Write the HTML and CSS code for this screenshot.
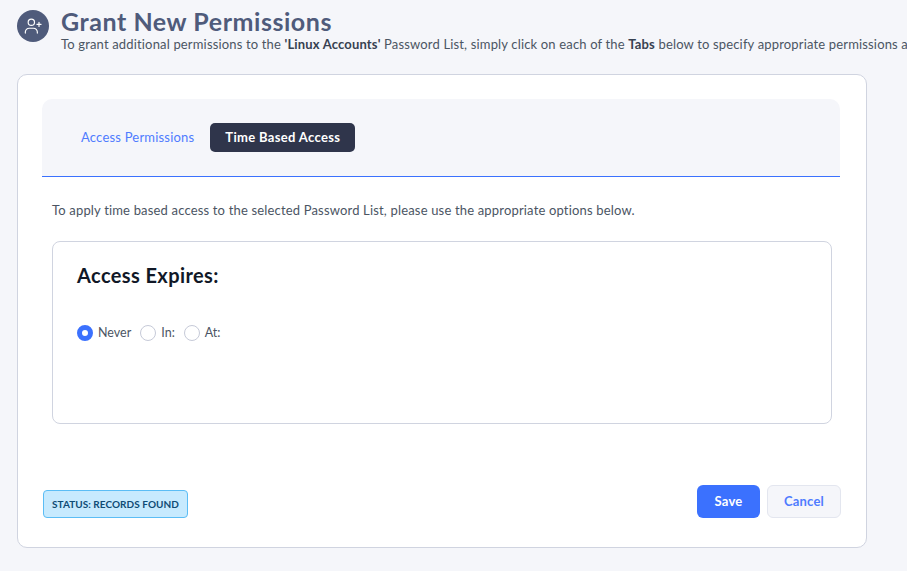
FILE: index.html
```html
<!DOCTYPE html>
<html lang="en">
<head>
  <meta charset="UTF-8" />
  <title>Grant New Permissions</title>
  <link rel="stylesheet" href="styles.css">
</head>
<body>
  <header class="page-head">
    <div class="head-icon">
      <svg viewBox="0 0 24 24" width="20" height="20" fill="none" stroke="#fff" stroke-width="1.4" stroke-linecap="round" stroke-linejoin="round">
        <circle cx="10" cy="7.5" r="3.8"/>
        <path d="M2.8 20.5v-1.2a4.6 4.6 0 0 1 4.6-4.6h5.2a4.6 4.6 0 0 1 4.6 4.6v1.2"/>
        <path d="M19.2 7.5v5M16.7 10h5"/>
      </svg>
    </div>
    <div class="head-text">
      <h1>Grant New Permissions</h1>
      <p>To grant additional permissions to the <b>'Linux Accounts'</b> Password List, simply click on each of the <b>Tabs</b> below to specify appropriate permissions a</p>
    </div>
  </header>

  <main class="card">
    <div class="tabs">
      <a class="tab" href="#">Access Permissions</a>
      <a class="tab active" href="#">Time Based Access</a>
    </div>

    <p class="intro">To apply time based access to the selected Password List, please use the appropriate options below.</p>

    <section class="expires">
      <h2>Access Expires:</h2>
      <div class="radios">
        <label class="radio"><span class="dot checked"></span>Never</label>
        <label class="radio"><span class="dot"></span>In:</label>
        <label class="radio"><span class="dot"></span>At:</label>
      </div>
    </section>

    <div class="foot">
      <span class="status">STATUS: RECORDS FOUND</span>
      <div class="actions">
        <button class="btn save">Save</button>
        <button class="btn cancel">Cancel</button>
      </div>
    </div>
  </main>
</body>
</html>
```

FILE: styles.css
```css
html, body {
  overflow: hidden;
}

body {
  margin: 0;
  padding: 10px 0 0 17px;
  height: 571px;
  box-sizing: border-box;
  background: #f5f6fa;
  color: #4b5675;
  font-family: Lato, sans-serif;
}

.page-head {
  display: flex;
  gap: 12px;
  height: 64px;
}

.head-icon {
  width: 32px;
  height: 32px;
  flex: none;
  border-radius: 50%;
  background: #4f5b7b;
  display: flex;
  align-items: center;
  justify-content: center;
}

.head-text {
  white-space: nowrap;
}

.head-text h1 {
  margin: 0;
  font-size: 25px;
  line-height: 23px;
  letter-spacing: 0.55px;
  font-weight: 700;
  color: #4f5b7b;
}

.head-text p {
  margin: 2px 0 0;
  font-size: 13px;
  line-height: 18px;
  letter-spacing: 0.16px;
  color: #4b5563;
}

.head-text b {
  color: #374151;
}

.card {
  width: 850px;
  height: 474px;
  box-sizing: border-box;
  background: #fff;
  border: 1px solid #d0d4e0;
  border-radius: 10px;
  padding: 24px 26px 29px 24px;
  display: flex;
  flex-direction: column;
}

.tabs {
  height: 78px;
  box-sizing: border-box;
  background: #f5f6fa;
  border-bottom: 1px solid #3b71fe;
  border-radius: 10px 10px 0 0;
  padding: 24px 0 0 31px;
  display: flex;
  align-items: flex-start;
  gap: 8px;
}

.tab {
  height: 29px;
  box-sizing: border-box;
  padding: 0 8px 2px;
  display: flex;
  align-items: center;
  font-size: 13px;
  letter-spacing: 0.2px;
  color: #4f7cff;
  text-decoration: none;
  border-radius: 5px;
}

.tab.active {
  padding: 0 15px 2px;
  background: #2f354b;
  color: #fff;
  font-weight: 700;
  letter-spacing: 0.33px;
}

.intro {
  margin: 25px 0 0 10px;
  font-size: 13px;
  line-height: 17px;
  letter-spacing: 0.17px;
  color: #4b5563;
}

.expires {
  margin: 22px 8px 0 10px;
  height: 183px;
  box-sizing: border-box;
  border: 1px solid #d0d4e0;
  border-radius: 8px;
  padding: 20px 24px;
}

.expires h2 {
  margin: 0;
  font-size: 20px;
  line-height: 27px;
  letter-spacing: 0.4px;
  font-weight: 700;
  color: #111827;
}

.radios {
  margin-top: 36px;
  display: flex;
  gap: 9px;
}

.radio {
  display: flex;
  align-items: center;
  gap: 5px;
  font-size: 12.5px;
  line-height: 16px;
  color: #4b5563;
}

.dot {
  width: 16px;
  height: 16px;
  box-sizing: border-box;
  border: 1px solid #c6cad8;
  border-radius: 50%;
  background: #fff;
}

.dot.checked {
  border: 5px solid #3b71fe;
}

.foot {
  margin-top: auto;
  margin-right: -1px;
  display: flex;
  justify-content: space-between;
  align-items: flex-end;
}

.status {
  margin: 0 0 0 1px;
  height: 28px;
  box-sizing: border-box;
  padding: 0 8px 1px;
  display: flex;
  align-items: center;
  background: #c7eafe;
  border: 1px solid #5bbdf5;
  border-radius: 4px;
  font-size: 10px;
  letter-spacing: 0.05px;
  font-weight: 700;
  color: #0f4c75;
}

.actions {
  display: flex;
  gap: 7px;
}

.btn {
  height: 33px;
  box-sizing: border-box;
  border-radius: 6px;
  padding: 0 0 2px;
  font-family: inherit;
  font-size: 13px;
  letter-spacing: 0.2px;
  font-weight: 700;
}

.save {
  width: 63px;
  border: none;
  background: #3b71fe;
  color: #fff;
}

.cancel {
  width: 74px;
  border: 1px solid #e3e6ef;
  background: #f5f6fa;
  color: #4f7cff;
}
```
